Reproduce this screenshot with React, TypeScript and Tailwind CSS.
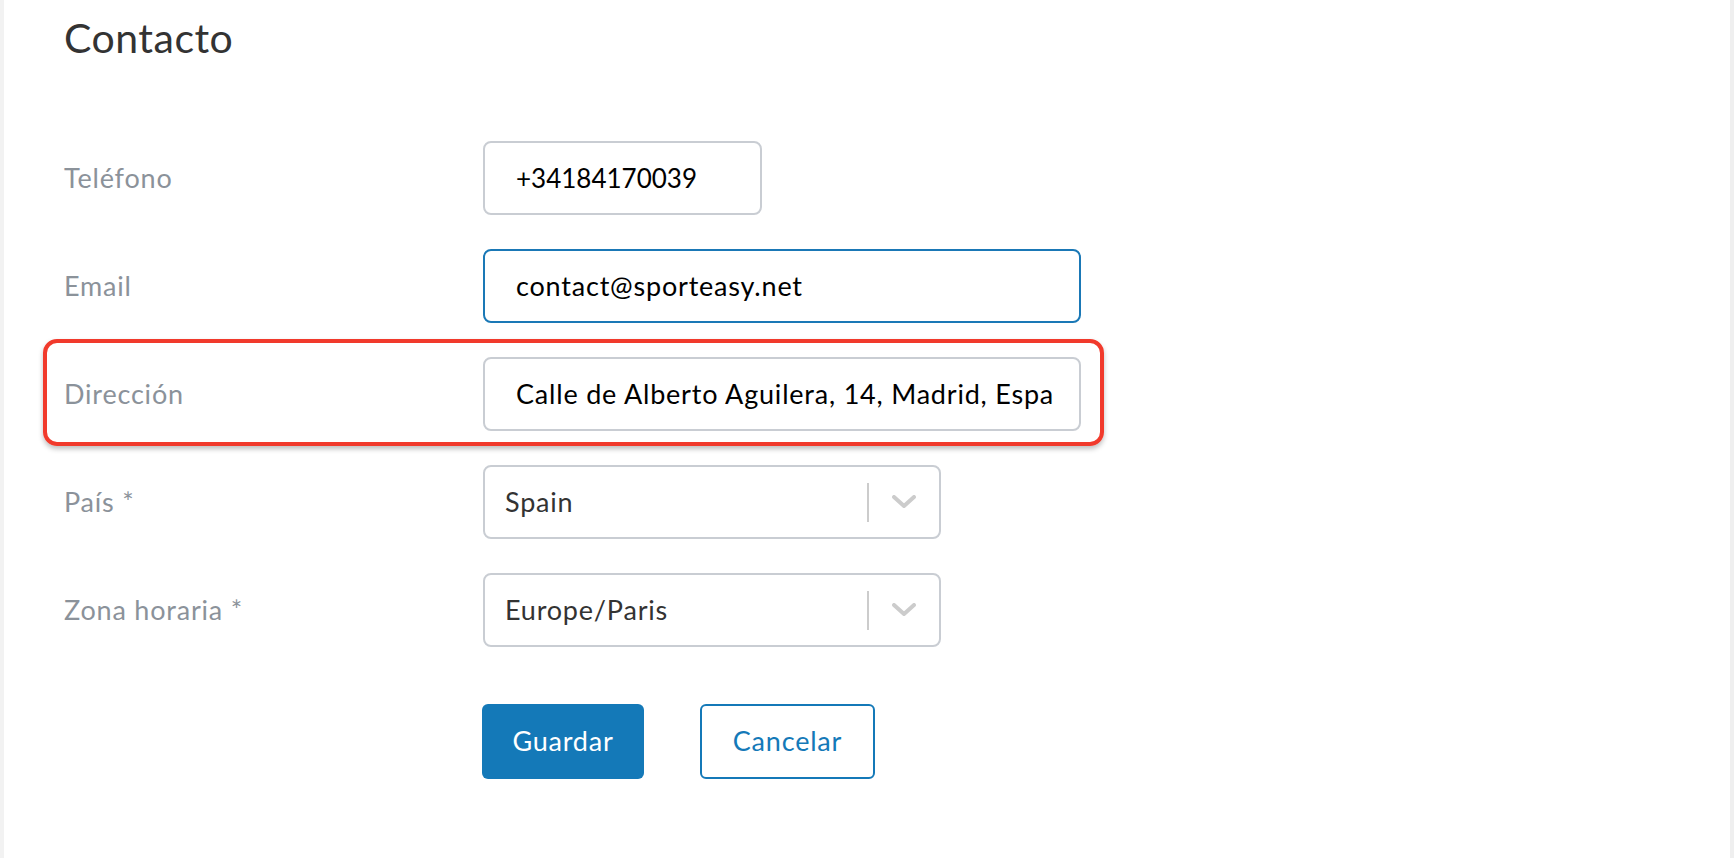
import * as React from "react";

const font = { fontFamily: "Lato, 'Noto Sans', sans-serif" };

function Chevron() {
  return (
    <svg width="24" height="14" viewBox="0 0 24 14" fill="none">
      <polyline
        points="2,2 12,11 22,2"
        stroke="#cccccc"
        strokeWidth="4"
        strokeLinecap="round"
        strokeLinejoin="round"
      />
    </svg>
  );
}

type RowProps = {
  label: string;
  children: React.ReactNode;
  highlight?: boolean;
};

function Row({ label, children, highlight }: RowProps) {
  return (
    <div className="relative flex items-center">
      {highlight && (
        <div className="pointer-events-none absolute -top-[18px] -bottom-[15px] -left-[21px] w-[1061px] rounded-[14px] border-[4px] border-[#f13a2c] shadow-[0_3px_5px_rgba(0,0,0,0.25)]" />
      )}
      <div className="w-[419px] shrink-0 text-[27px] tracking-[0.8px] text-[#8b929a]">
        {label}
      </div>
      {children}
    </div>
  );
}

function TextInput({
  value,
  width,
  focused,
  digits,
}: {
  value: string;
  width: string;
  focused?: boolean;
  digits?: boolean;
}) {
  return (
    <div
      className={
        "flex h-[74px] items-center rounded-[8px] border-2 bg-white pl-[31px] pr-[24px] text-black " +
        width +
        (focused ? " border-[#1a78b6]" : " border-[#c9cdd3]") +
        (digits ? " text-[26px]" : " text-[27px] tracking-[0.8px]")
      }
    >
      <div className="flex-1 overflow-hidden whitespace-nowrap">{value}</div>
    </div>
  );
}

function Select({ value }: { value: string }) {
  return (
    <div className="flex h-[74px] w-[458px] items-center rounded-[8px] border-2 border-[#c9cdd3] bg-white pl-[20px] text-[27px] tracking-[0.8px] text-[#333333]">
      <span className="flex-1">{value}</span>
      <div className="h-[39px] w-[2px] bg-[#cccccc]" />
      <div className="flex w-[70px] items-center justify-center">
        <Chevron />
      </div>
    </div>
  );
}

export default function App() {
  return (
    <div className="flex min-h-[858px] w-full bg-white" style={font}>
      <div className="w-[4px] shrink-0 bg-[#f2f2f2]" />
      <div className="flex-1 pl-[60px] pt-[14px]">
        <h1 className="text-[41px] leading-[48px] tracking-[0.5px] text-[#333333]">
          Contacto
        </h1>
        <div className="mt-[79px] flex flex-col gap-[34px]">
          <Row label="Teléfono">
            <TextInput value="+34184170039" width="w-[279px]" digits />
          </Row>
          <Row label="Email">
            <TextInput value="contact@sporteasy.net" width="w-[598px]" focused />
          </Row>
          <Row label="Dirección" highlight>
            <TextInput
              value="Calle de Alberto Aguilera, 14, Madrid, España"
              width="w-[598px]"
            />
          </Row>
          <Row label="País *">
            <Select value="Spain" />
          </Row>
          <Row label="Zona horaria *">
            <Select value="Europe/Paris" />
          </Row>
        </div>
        <div className="ml-[418px] mt-[57px] flex gap-[56px]">
          <button
            type="button"
            className="h-[75px] w-[162px] rounded-[6px] bg-[#1479b8] text-[27px] tracking-[0.8px] text-white"
          >
            Guardar
          </button>
          <button
            type="button"
            className="h-[75px] w-[175px] rounded-[6px] border-2 border-[#1479b8] bg-white text-[27px] tracking-[0.8px] text-[#1479b8]"
          >
            Cancelar
          </button>
        </div>
      </div>
      <div className="w-[4px] shrink-0 bg-[#efefef]" />
    </div>
  );
}
